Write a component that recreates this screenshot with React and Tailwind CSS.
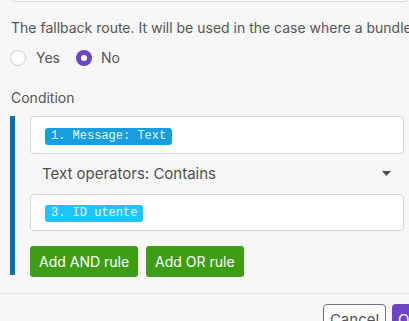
export default function App() {
  return (
    <div className="h-[321px] w-[409px] overflow-hidden bg-[#f7f7f7] font-['Inter',sans-serif] text-[#555]">
      {/* input above, cut off */}
      <div className="ml-[11px] -mt-[38px] h-[40px] rounded-[4px] border border-[#d6d6d6] bg-white" />

      <div className="pl-[11px]">
        <p className="mt-[16px] whitespace-nowrap text-[14px] leading-[20px]">
          The fallback route. It will be used in the case where a bundle
        </p>

        <div className="mt-[12px] flex items-center h-[16px]">
          <span className="-ml-[1px] h-[16px] w-[16px] rounded-full border border-[#d0d0d0] bg-white" />
          <span className="ml-[10px] text-[14px] leading-[16px]">Yes</span>
          <span className="ml-[16px] flex h-[16px] w-[16px] items-center justify-center rounded-full bg-[#6c46c3]">
            <span className="h-[6px] w-[6px] rounded-full bg-white" />
          </span>
          <span className="ml-[9px] text-[14px] leading-[16px]">No</span>
        </div>

        <p className="mt-[22px] text-[14px] leading-[20px]">Condition</p>
      </div>

      {/* condition block */}
      <div className="mt-[8px] ml-[10px] flex">
        <div className="w-[5px] h-[159px] bg-[#0070ad]" />
        <div className="ml-[15px] w-[374px]">
          <div className="flex h-[38px] items-start rounded-[4px] border border-[#d6d6d6] bg-white pl-[14px] pt-[11px]">
            <Pill color="bg-[#179de0]">1. Message: Text</Pill>
          </div>
          <div className="flex h-[40px] items-center pl-[12px] pr-[13px]">
            <span className="text-[15px] leading-[20px] text-[#4f4f4f]">Text operators: Contains</span>
            <svg className="ml-auto" width="9" height="6" viewBox="0 0 9 6">
              <path d="M0 0 H9 L4.5 5 Z" fill="#4f4f4f" />
            </svg>
          </div>
          <div className="flex h-[37px] items-start rounded-[4px] border border-[#d6d6d6] bg-white pl-[14px] pt-[10px]">
            <Pill color="bg-[#1ec4ff]">3. ID utente</Pill>
          </div>
          <div className="mt-[15px] flex gap-[8px]">
            <button className="h-[31px] rounded-[3px] bg-[#3d9e15] px-[9px] text-[14px] text-white">
              Add AND rule
            </button>
            <button className="h-[31px] rounded-[3px] bg-[#3d9e15] px-[9px] text-[14px] text-white">
              Add OR rule
            </button>
          </div>
        </div>
      </div>

      <div className="mt-[16px] h-px bg-[#e4e4e4]" />

      <div className="mt-[10px] flex justify-end gap-[6px]">
        <button className="h-[32px] w-[63px] rounded-[4px] border border-[#6b7280] bg-white text-[15px] text-[#555]">
          Cancel
        </button>
        <button className="h-[32px] w-[60px] shrink-0 rounded-l-[4px] bg-[#6f45c4] pl-[6px] text-left text-[15px] text-white -mr-[43px]">
          Ok
        </button>
      </div>
    </div>
  );
}

function Pill({ color, children }) {
  return (
    <span
      className={`block h-[17px] rounded-[3px] px-[6px] font-['Liberation_Mono',monospace] text-[12px] leading-[17px] text-[#e8faff] ${color}`}
    >
      {children}
    </span>
  );
}
